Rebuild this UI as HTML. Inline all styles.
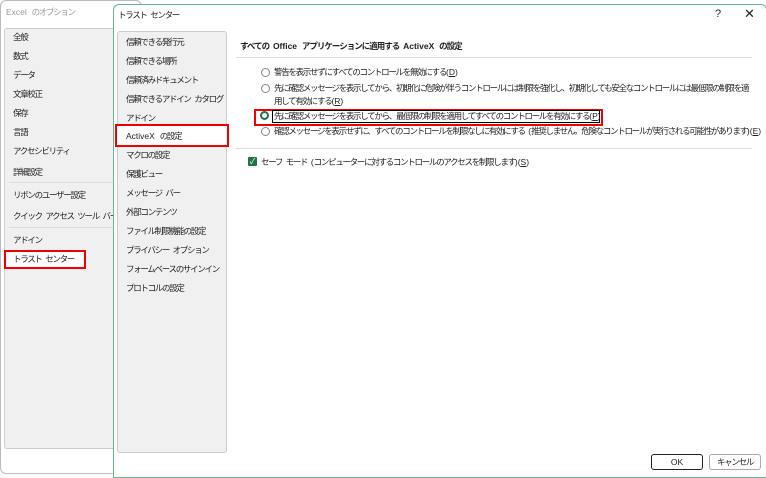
<html><head><style>
body{margin:0;width:766px;height:476px;background:#fff;font-family:"Liberation Sans","Noto Sans CJK JP",sans-serif;font-size:8.5px;letter-spacing:-1.3px;word-spacing:2.5px;color:#222;position:relative;overflow:hidden}
.a{position:absolute;white-space:nowrap}
.l{letter-spacing:0}
</style></head><body>
<div class="a" style="left:0;top:0;width:140px;height:472px;border:1px solid #bbb;border-radius:6px;background:#fff"></div>
<div class="a" style="left:6px;top:6px;color:#999;font-size:8.5px"><span class="l">Excel </span>のオプション</div>
<div class="a" style="left:4px;top:28px;width:120px;height:419px;background:#f0f0f0;border:1px solid #ccc;border-radius:3px"></div>
<div class="a" style="left:13px;top:31px">全般</div>
<div class="a" style="left:13px;top:50px">数式</div>
<div class="a" style="left:13px;top:69px">データ</div>
<div class="a" style="left:13px;top:88px">文章校正</div>
<div class="a" style="left:13px;top:107px">保存</div>
<div class="a" style="left:13px;top:126px">言語</div>
<div class="a" style="left:13px;top:145px">アクセシビリティ</div>
<div class="a" style="left:13px;top:166px">詳細設定</div>
<div class="a" style="left:9px;top:182px;width:110px;height:1px;background:#ddd"></div>
<div class="a" style="left:13px;top:189px">リボンのユーザー設定</div>
<div class="a" style="left:13px;top:210px">クイック アクセス ツール バー</div>
<div class="a" style="left:9px;top:227px;width:110px;height:1px;background:#ddd"></div>
<div class="a" style="left:13px;top:234px">アドイン</div>
<div class="a" style="left:4px;top:250px;width:78px;height:15px;border:2px solid #e00;background:#fff"></div>
<div class="a" style="left:13px;top:253px">トラスト センター</div>

<div class="a" style="left:113px;top:4px;width:652px;height:472px;background:#fff;border:1px solid #6bb48e;border-radius:6px 6px 0 0"></div>
<div class="a" style="left:118px;top:9px">トラスト センター</div>
<div class="a" style="left:715px;top:8px;font-size:11px">?</div>
<div class="a" style="left:744px;top:6px;font-size:13px">✕</div>
<div class="a" style="left:117px;top:31px;width:108px;height:420px;background:#f0f0f0;border:1px solid #ccc;border-radius:3px"></div>
<div class="a" style="left:126px;top:36px">信頼できる発行元</div>
<div class="a" style="left:126px;top:55px">信頼できる場所</div>
<div class="a" style="left:126px;top:74px">信頼済みドキュメント</div>
<div class="a" style="left:126px;top:93px">信頼できるアドイン カタログ</div>
<div class="a" style="left:126px;top:112px">アドイン</div>
<div class="a" style="left:115px;top:124px;width:110px;height:19px;border:2px solid #e00;background:#fff"></div>
<div class="a" style="left:126px;top:130px"><span class="l">ActiveX </span>の設定</div>
<div class="a" style="left:126px;top:149px">マクロの設定</div>
<div class="a" style="left:126px;top:168px">保護ビュー</div>
<div class="a" style="left:126px;top:187px">メッセージ バー</div>
<div class="a" style="left:126px;top:206px">外部コンテンツ</div>
<div class="a" style="left:126px;top:225px">ファイル制限機能の設定</div>
<div class="a" style="left:126px;top:244px">プライバシー オプション</div>
<div class="a" style="left:126px;top:263px">フォームベースのサインイン</div>
<div class="a" style="left:126px;top:282px">プロトコルの設定</div>

<div class="a" style="left:240px;top:40px;font-weight:bold;letter-spacing:-1px">すべての <span class="l">Office </span>アプリケーションに適用する <span class="l">ActiveX </span>の設定</div>
<div class="a" style="left:236px;top:57px;width:516px;height:1px;background:#ddd"></div>
<div class="a" style="left:261px;top:68px;width:7px;height:7px;border:1px solid #888;border-radius:50%"></div>
<div class="a" style="left:274px;top:66px">警告を表示せずにすべてのコントロールを無効にする<span class="l">(<u>D</u>)</span></div>
<div class="a" style="left:261px;top:84px;width:7px;height:7px;border:1px solid #888;border-radius:50%"></div>
<div class="a" style="left:274px;top:82px;line-height:13px">先に確認メッセージを表示してから、初期化に危険が伴うコントロールには制限を強化し、初期化しても安全なコントロールには最低限の制限を適<br>用して有効にする<span class="l">(<u>R</u>)</span></div>
<div class="a" style="left:254px;top:109px;width:345px;height:13px;border:2px solid #e00"></div>
<div class="a" style="left:272px;top:110px;width:326px;height:11px;border:1px solid #000"></div>
<div class="a" style="left:260px;top:111px;width:5px;height:5px;border:2px solid #217346;border-radius:50%"></div>
<div class="a" style="left:274px;top:110px">先に確認メッセージを表示してから、最低限の制限を適用してすべてのコントロールを有効にする<span class="l">(<u>P</u>)</span></div>
<div class="a" style="left:261px;top:127px;width:7px;height:7px;border:1px solid #888;border-radius:50%"></div>
<div class="a" style="left:274px;top:125px">確認メッセージを表示せずに、すべてのコントロールを制限なしに有効にする <span class="l">(</span>推奨しません。危険なコントロールが実行される可能性があります<span class="l">)(<u>E</u>)</span></div>
<div class="a" style="left:236px;top:148px;width:516px;height:1px;background:#ddd"></div>
<div class="a" style="left:248px;top:157px;width:9px;height:9px;background:#217346;border-radius:1px;color:#fff;font-size:8px;line-height:9px;text-align:center;letter-spacing:0">✓</div>
<div class="a" style="left:261px;top:156px">セーフ モード <span class="l">(</span>コンピューターに対するコントロールのアクセスを制限します<span class="l">)(<u>S</u>)</span></div>

<div class="a" style="left:651px;top:454px;width:50px;height:14px;border:1.5px solid #222;border-radius:3px;text-align:center;line-height:14px;letter-spacing:0">OK</div>
<div class="a" style="left:709px;top:454px;width:50px;height:14px;border:1px solid #aaa;border-radius:3px;text-align:center;line-height:14px">キャンセル</div>
</body></html>
